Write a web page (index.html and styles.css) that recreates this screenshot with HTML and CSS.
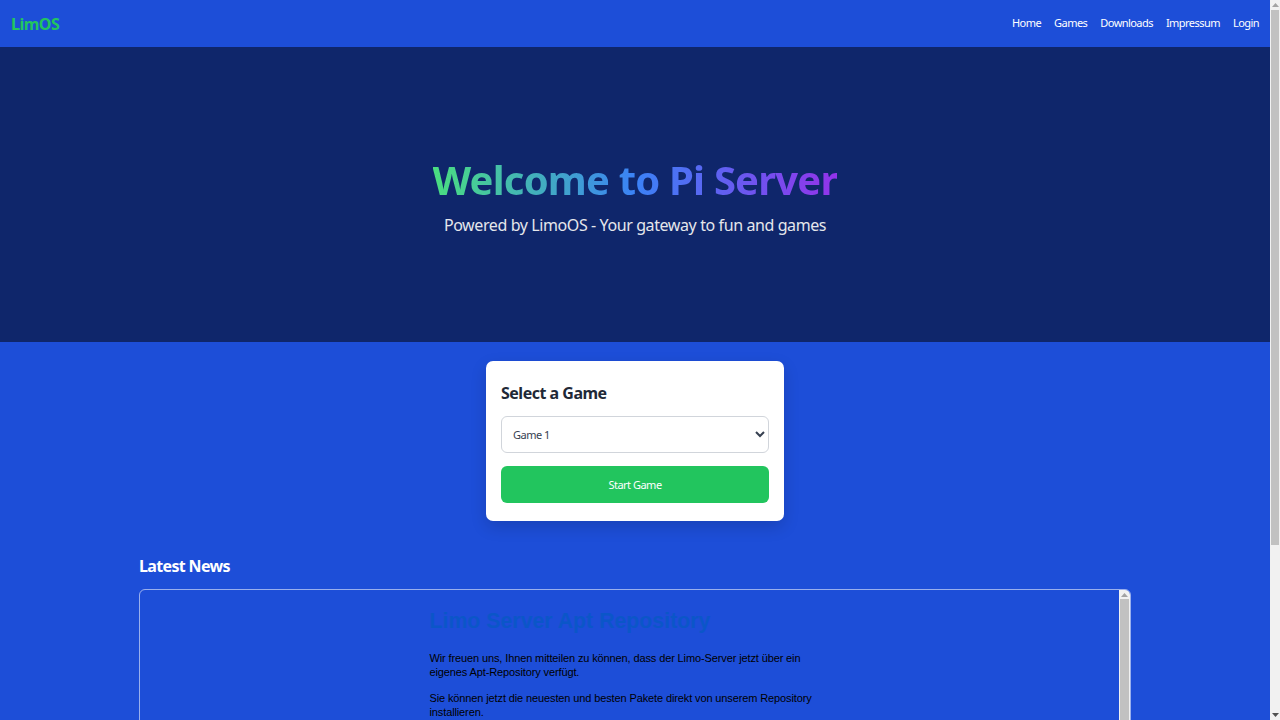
FILE: index.html
```html
<!DOCTYPE html>
<html lang="de">
<head>
<meta charset="utf-8">
<title>Pi Server - LimoOS</title>
<link rel="stylesheet" href="styles.css">
</head>
<body>
<nav class="topbar">
  <a class="brand" href="#">LimOS</a>
  <ul class="nav-links">
    <li><a href="#">Home</a></li>
    <li><a href="#">Games</a></li>
    <li><a href="#">Downloads</a></li>
    <li><a href="#">Impressum</a></li>
    <li><a href="#">Login</a></li>
  </ul>
</nav>
<header class="hero">
  <h1 class="hero-title">Welcome to Pi Server</h1>
  <p class="hero-sub">Powered by LimoOS - Your gateway to fun and games</p>
</header>
<main class="content">
  <div class="game-card">
    <h2 class="card-title">Select a Game</h2>
    <select class="game-select">
      <option>Game 1</option>
      <option>Game 2</option>
      <option>Game 3</option>
    </select>
    <button class="start-btn" type="button">Start Game</button>
  </div>
  <section class="news">
    <h2 class="news-title">Latest News</h2>
    <iframe class="news-frame" title="News" srcdoc="<!DOCTYPE html><html><head><style>html,body{margin:0;background:transparent;}body{font-family:'Liberation Sans',Arial,sans-serif;font-size:11px;letter-spacing:-0.12px;color:#000;padding-right:11px;}.wrap{max-width:400px;margin:0 auto;padding:19px 0 120px;}h1{font-size:21.3px;color:#0b56c8;margin:0 0 17px;font-weight:bold;letter-spacing:0;}p{margin:0 0 12px;line-height:14px;}.sb{position:fixed;top:0;right:0;bottom:0;width:11px;background:#f1f1f1;display:flex;flex-direction:column;}.sb-btn{height:11px;display:flex;align-items:center;justify-content:center;}.sb-thumb{height:360px;margin:0 1px;background:#c1c1c1;}</style></head><body><div class='wrap'><h1>Limo Server Apt Repository</h1><p>Wir freuen uns, Ihnen mitteilen zu können, dass der Limo-Server jetzt über ein eigenes Apt-Repository verfügt.</p><p>Sie können jetzt die neuesten und besten Pakete direkt von unserem Repository installieren.</p><p>Fügen Sie einfach das Repository zu Ihrer sources.list hinzu und aktualisieren Sie Ihre Paketliste.</p><p>Viel Spaß mit den neuen Paketen!</p></div><div class='sb' aria-hidden='true'><div class='sb-btn'><svg width='7' height='4' viewBox='0 0 7 4'><path d='M0 4 L3.5 0 L7 4 Z' fill='#a3a3a3'/></svg></div><div class='sb-thumb'></div></div></body></html>"></iframe>
  </section>
</main>
<div class="page-scrollbar" aria-hidden="true">
  <div class="sb-btn"><svg width="7" height="4" viewBox="0 0 7 4"><path d="M0 4 L3.5 0 L7 4 Z" fill="#a3a3a3"/></svg></div>
  <div class="sb-thumb"></div>
  <div class="sb-space"></div>
  <div class="sb-btn"><svg width="7" height="4" viewBox="0 0 7 4"><path d="M0 0 L3.5 4 L7 0 Z" fill="#505050"/></svg></div>
</div>
</body>
</html>
```
FILE: styles.css
```css
* { box-sizing: border-box; }

html, body {
  margin: 0;
  padding: 0;
}

body {
  background: #1d4ed8;
  font-family: "Noto Sans", "Open Sans", sans-serif;
  color: #fff;
  padding-right: 10px;
}

/* drawn page scrollbar (the browser's own is hidden in this renderer) */
.page-scrollbar {
  position: fixed;
  top: 0;
  right: 0;
  width: 10px;
  height: 100vh;
  background: #f1f1f1;
  display: flex;
  flex-direction: column;
}

.sb-btn {
  height: 10px;
  display: flex;
  align-items: center;
  justify-content: center;
}

.sb-thumb {
  height: 535px;
  margin: 0 1px;
  background: #c1c1c1;
}

.sb-space {
  flex: 1;
}

.topbar {
  height: 47px;
  padding: 0 11px;
  display: flex;
  align-items: center;
  justify-content: space-between;
  background: #1d4ed8;
}

.brand {
  color: #22c55e;
  font-weight: 700;
  font-size: 16px;
  letter-spacing: -0.5px;
  line-height: 20px;
  text-decoration: none;
}

.nav-links {
  list-style: none;
  margin: 0 0 3px;
  padding: 0;
  display: flex;
  gap: 13px;
  line-height: 18px;
}

.nav-links a {
  color: #fff;
  text-decoration: none;
  font-size: 11px;
  letter-spacing: -0.55px;
}

.hero {
  height: 295px;
  background: #0f266b;
  display: flex;
  flex-direction: column;
  align-items: center;
  justify-content: center;
}

.hero-title {
  margin: 0;
  font-size: 40px;
  letter-spacing: -0.8px;
  font-weight: 700;
  line-height: 54px;
  background: linear-gradient(90deg, #4ade80, #3b82f6 50%, #9333ea);
  -webkit-background-clip: text;
  background-clip: text;
  color: transparent;
}

.hero-sub {
  margin: 7px 0 0;
  font-size: 16px;
  letter-spacing: -0.4px;
  color: #e5e7eb;
}

.content {
  padding: 19px 0 32px;
}

.game-card {
  width: 298px;
  margin: 0 auto;
  background: #fff;
  border-radius: 7px;
  padding: 17px 15px 18px;
  box-shadow: 0 6px 16px rgba(0, 0, 0, 0.15);
  display: flex;
  flex-direction: column;
}

.card-title {
  margin: 0 0 8px;
  font-size: 16px;
  letter-spacing: -0.5px;
  line-height: 30px;
  font-weight: 700;
  color: #1f2937;
}

.game-select {
  height: 37px;
  width: 100%;
  border: 1px solid #d1d5db;
  border-radius: 6px;
  padding: 0 7px;
  font-family: inherit;
  font-size: 11px;
  letter-spacing: -0.5px;
  color: #374151;
  background: #fff;
}

.start-btn {
  margin-top: 13px;
  height: 37px;
  width: 100%;
  border: none;
  border-radius: 6px;
  background: #22c55e;
  color: #fff;
  font-family: inherit;
  font-size: 11px;
  letter-spacing: -0.5px;
}

.news {
  width: 992px;
  margin: 31px auto 0;
}

.news-title {
  margin: 0 0 9px;
  font-size: 16px;
  letter-spacing: -0.65px;
  line-height: 28px;
  font-weight: 700;
  color: #fff;
}

.news-frame {
  display: block;
  width: 100%;
  height: 320px;
  border: 1px solid rgba(255, 255, 255, 0.55);
  border-radius: 6px;
  background: transparent;
}
```
